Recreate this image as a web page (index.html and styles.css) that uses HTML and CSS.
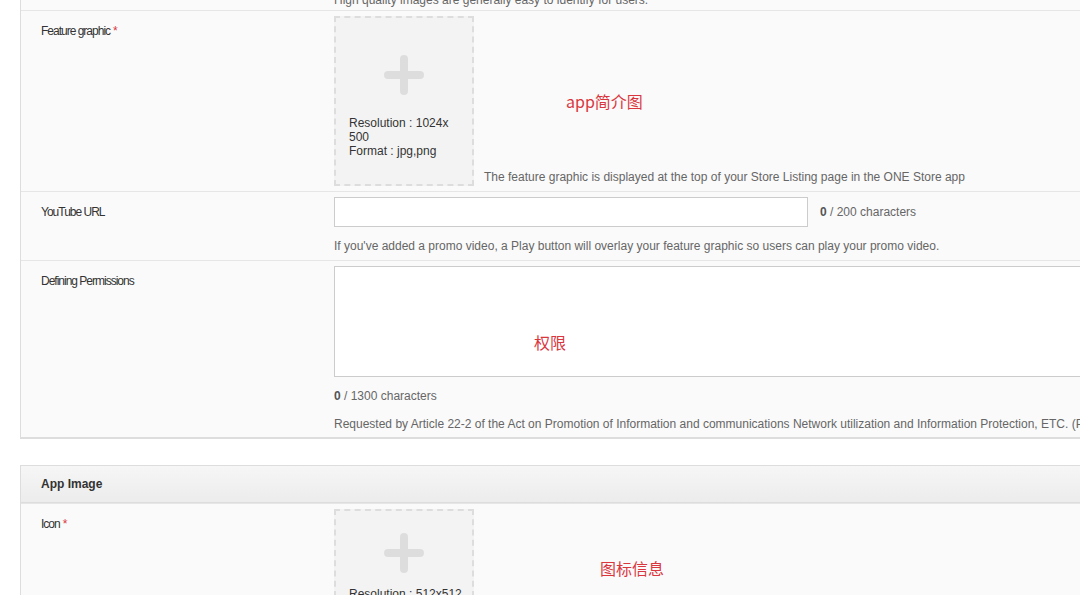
FILE: index.html
```html
<!DOCTYPE html>
<html lang="en">
<head>
  <meta charset="UTF-8">
  <meta name="viewport" content="width=device-width, initial-scale=1.0">
  <title>Store Listing</title>
  <link rel="stylesheet" href="styles.css">
</head>
<body>
  <div class="page">
    <section class="panel">
      <div class="row row-cut">
        <div class="label"></div>
        <div class="field">
          <p class="help">High quality images are generally easy to identify for users.</p>
        </div>
      </div>

      <div class="row">
        <div class="label">Feature graphic<span class="req">*</span></div>
        <div class="field">
          <div class="upload-line">
            <div class="upload">
              <span class="plus"></span>
              <p class="upload-info">Resolution : 1024x<br>500<br>Format : jpg,png</p>
            </div>
            <p class="help">The feature graphic is displayed at the top of your Store Listing page in the ONE Store app</p>
          </div>
        </div>
        <span class="note note-feature">app简介图</span>
      </div>

      <div class="row">
        <div class="label">YouTube URL</div>
        <div class="field field-url">
          <div class="input-line">
            <input type="text" class="text-input">
            <span class="count"><b>0</b> / 200 characters</span>
          </div>
          <p class="help help-gap">If you've added a promo video, a Play button will overlay your feature graphic so users can play your promo video.</p>
        </div>
      </div>

      <div class="row">
        <div class="label">Defining Permissions</div>
        <div class="field field-last">
          <textarea class="text-area"></textarea>
          <p class="count count-block"><b>0</b> / 1300 characters</p>
          <p class="help help-legal">Requested by Article 22-2 of the Act on Promotion of Information and communications Network utilization and Information Protection, ETC. (Permission to access)</p>
        </div>
        <span class="note note-perm">权限</span>
      </div>
    </section>

    <section class="panel panel-image">
      <div class="panel-head">App Image</div>
      <div class="row">
        <div class="label">Icon<span class="req">*</span></div>
        <div class="field">
          <div class="upload upload-icon">
            <span class="plus"></span>
            <p class="upload-info">Resolution : 512x512<br>Format : png</p>
          </div>
        </div>
        <span class="note note-icon">图标信息</span>
      </div>
    </section>
  </div>
</body>
</html>
```

FILE: styles.css
```css
html, body {
  margin: 0;
  padding: 0;
  background-color: #ffffff;
  overflow: hidden;
}
body {
  font-family: 'Liberation Sans', Arial, sans-serif;
  font-size: 12px;
  color: #333333;
}
p {
  margin: 0;
}
.page {
  width: 1240px;
  padding-left: 20px;
}
.panel {
  background-color: #fafafa;
  border-left: 1px solid #dddddd;
  border-bottom: 2px solid #dddddd;
}
.panel-image {
  margin-top: 26px;
  border-top: 1px solid #dddddd;
  border-bottom: none;
}
.panel-head {
  height: 36px;
  line-height: 36px;
  padding-left: 20px;
  font-weight: bold;
  color: #333333;
  background: linear-gradient(#f6f6f6, #ececec);
  border-bottom: 1px solid #dddddd;
}
.row {
  position: relative;
  display: flex;
  border-top: 1px solid #e6e6e6;
}
.row-cut {
  height: 10px;
  overflow: hidden;
  border-top: none;
}
.row-cut .help {
  margin-top: -12px;
}
.label {
  width: 273px;
  flex-shrink: 0;
  padding: 12px 20px;
  line-height: 16px;
  letter-spacing: -1px;
  color: #333333;
}
.req {
  color: #d9363e;
  margin-left: 3px;
  letter-spacing: 0;
}
.field {
  flex: 1;
  padding: 5px 0 8px;
}
.field-url {
  padding-bottom: 7px;
}
.field-last {
  padding-bottom: 6px;
}
.help {
  line-height: 14px;
  color: #666666;
}
.help-gap {
  margin-top: 12px;
}
.help-legal {
  margin-top: 14px;
  white-space: nowrap;
}
.upload-line {
  display: flex;
  align-items: flex-end;
  gap: 10px;
  margin-bottom: -3px;
}
.upload-line .help {
  padding-bottom: 2px;
}
.upload {
  position: relative;
  width: 136px;
  height: 166px;
  flex-shrink: 0;
  border: 2px dashed #dddddd;
  background-color: #f3f3f3;
}
.plus {
  position: absolute;
  left: 50%;
  top: 37px;
  width: 40px;
  height: 40px;
  margin-left: -20px;
}
.plus::before,
.plus::after {
  content: "";
  position: absolute;
  background-color: #dddddd;
  border-radius: 4px;
}
.plus::before {
  left: 0;
  top: 16px;
  width: 40px;
  height: 8px;
}
.plus::after {
  left: 16px;
  top: 0;
  width: 8px;
  height: 40px;
}
.upload-info {
  padding: 98px 0 0 13px;
  line-height: 14px;
  color: #333333;
}
.upload-icon .plus {
  top: 22px;
}
.upload-icon .upload-info {
  padding-top: 76px;
}
.input-line {
  display: flex;
  align-items: center;
  gap: 12px;
}
.text-input {
  margin: 0;
  padding: 0 6px;
  box-sizing: border-box;
  width: 474px;
  height: 30px;
  border: 1px solid #cccccc;
  background-color: #ffffff;
}
.count {
  color: #666666;
  line-height: 14px;
}
.count b {
  color: #555555;
}
.count-block {
  margin-top: 12px;
}
.text-area {
  display: block;
  width: 900px;
  height: 111px;
  margin: 0;
  box-sizing: border-box;
  border: 1px solid #cccccc;
  background-color: #ffffff;
  resize: none;
}
.note {
  position: absolute;
  font-family: 'Noto Sans CJK SC', 'Liberation Sans', sans-serif;
  font-size: 16px;
  line-height: 20px;
  color: #d9363e;
}
.note-feature {
  left: 545px;
  top: 80px;
}
.note-perm {
  left: 513px;
  top: 71px;
}
.note-icon {
  left: 579px;
  top: 54px;
}
```
